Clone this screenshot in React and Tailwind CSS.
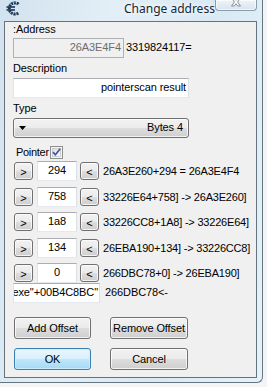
import React from "react";

const btn =
  "flex items-center justify-center border border-[#707070] rounded-[3px] bg-[linear-gradient(#f2f2f2_0%,#ebebeb_48%,#dddddd_52%,#cfcfcf_100%)] shadow-[inset_0_0_0_1px_rgba(255,255,255,0.75)] text-black";

const edit =
  "bg-white border border-t-[#abadb3] border-l-[#e2e3ea] border-r-[#dbdfe6] border-b-[#e3e9ef]";

function SmallBtn({ ch }) {
  return (
    <div className={`${btn} w-[19px] h-[18px] text-[11px] leading-none pb-[1px]`}>
      <span className="relative top-[2px]">{ch}</span>
    </div>
  );
}

function Row({ mt, val, text }) {
  return (
    <div className={`flex items-center h-[20px] ${mt}`}>
      <div className="ml-[1px]">
        <SmallBtn ch=">" />
      </div>
      <div className={`${edit} ml-[4px] w-[40px] h-[20px] flex items-center justify-center`}>
        <span className="relative -top-[1px]">{val}</span>
      </div>
      <div className="ml-[3px]">
        <SmallBtn ch="<" />
      </div>
      <span className="ml-[4px] whitespace-nowrap tracking-[-0.2px]">{text}</span>
    </div>
  );
}

function CeIcon() {
  return (
    <svg width="16" height="15" viewBox="0 0 16 15">
      <path
        d="M13.5 3.2 A5.6 5.6 0 1 0 13.5 11.8"
        fill="none"
        stroke="#1d3654"
        strokeWidth="3"
        strokeDasharray="2 0.8"
      />
      <path d="M1.5 6 H10" stroke="#1d3654" strokeWidth="1.6" />
      <path d="M1.5 9 H10" stroke="#1d3654" strokeWidth="1.6" />
      <path d="M12.8 3.6 A5 5 0 0 0 4 4" fill="none" stroke="#3f7fb0" strokeWidth="0.8" />
    </svg>
  );
}

function CloseBtn() {
  return (
    <div className="ml-auto mr-[5px] w-[46px] h-[11px] rounded-b-[4px] border border-t-0 border-[#8a9bab] bg-[linear-gradient(#eef4f9,#d7e4ee)] shadow-[inset_0_0_0_1px_rgba(255,255,255,0.6)] flex justify-center">
      <svg width="12" height="10" viewBox="0 0 12 10" className="-mt-[2px]">
        <path
          d="M1.5 0 L4.3 0 L6 2.2 L7.7 0 L10.5 0 L7.6 4 L10.5 8 L7.7 8 L6 5.8 L4.3 8 L1.5 8 L4.4 4 Z"
          fill="#f6f8fa"
          stroke="#6f7a84"
          strokeWidth="0.8"
        />
      </svg>
    </div>
  );
}

function Checkbox() {
  return (
    <svg width="13" height="13" viewBox="0 0 13 13">
      <defs>
        <linearGradient id="cbg" x1="0" y1="0" x2="1" y2="1">
          <stop offset="0" stopColor="#dcdcdc" />
          <stop offset="1" stopColor="#ffffff" />
        </linearGradient>
      </defs>
      <rect x="0.5" y="0.5" width="12" height="12" fill="#f4f4f4" stroke="#8e8f8f" />
      <rect x="2.5" y="2.5" width="8" height="8" fill="url(#cbg)" stroke="#c4c4c4" strokeWidth="0.8" />
      <path d="M3 6.2 L5.4 8.8 L10.2 2.8" fill="none" stroke="#3b59a8" strokeWidth="1.7" />
    </svg>
  );
}

export default function App() {
  return (
    <div className="w-[267px] h-[387px] overflow-hidden bg-[#f2f4f6] font-['Liberation_Sans',Arial,sans-serif] text-[11px] leading-[13px] tracking-[-0.1px] text-black">
      <div className="w-[263px] h-[383px] flex flex-col border-r border-b border-[#66757f] rounded-br-[6px] bg-[linear-gradient(100deg,#d2e2ee_0%,#e3eff7_35%,#d9e9f4_65%,#e4f3f9_100%)]">
        {/* title bar */}
        <div className="h-[21px] flex items-start">
          <div className="ml-[5px] mt-[1px]">
            <CeIcon />
          </div>
          <span className="ml-[103px] mt-[1px] text-[12px] leading-[15px] tracking-normal text-[#15263a] font-['Noto_Sans',sans-serif] [text-shadow:0_0_6px_#ffffff,0_0_4px_#ffffff] whitespace-nowrap">
            Change address
          </span>
          <CloseBtn />
        </div>
        {/* client */}
        <div className="ml-[4px] w-[253px] h-[357px] border border-[#66737c] bg-[#f0f0f0] pl-[8px] pt-[1px] flex flex-col">
          <div>:Address</div>
          <div className="mt-[2px] flex items-center">
            <div className="w-[111px] h-[20px] border border-[#adb2b5] bg-[#f0f0f0] text-[#6d6d6d] flex items-center justify-end pr-[2px]">
              <span className="relative -top-[1px]">26A3E4F4</span>
            </div>
            <span className="ml-[2px] relative -top-[1px]">3319824117=</span>
          </div>
          <div className="mt-[4px]">Description</div>
          <div className={`${edit} mt-[3px] w-[176px] h-[20px] flex items-center justify-end pr-[2px]`}>
            <span className="relative -top-[1px]">pointerscan result</span>
          </div>
          <div className="mt-[4px]">Type</div>
          <div className={`${btn} mt-[3px] w-[176px] h-[20px] !justify-between px-[5px]`}>
            <svg width="7" height="4" viewBox="0 0 7 4">
              <path d="M0 0 H7 L3.5 4 Z" fill="#000" />
            </svg>
            <span className="relative -top-[1px]">Bytes 4</span>
          </div>
          <div className="mt-[8px] h-[13px] flex items-center">
            <span className="ml-[3px] mr-[1px] tracking-[-0.3px]">Pointer</span>
            <Checkbox />
          </div>
          <Row mt="mt-[2px]" val="294" text="26A3E260+294 = 26A3E4F4" />
          <Row mt="mt-[6px]" val="758" text="33226E64+758] -> 26A3E260]" />
          <Row mt="mt-[5px]" val="1a8" text="33226CC8+1A8] -> 33226E64]" />
          <Row mt="mt-[6px]" val="134" text="26EBA190+134] -> 33226CC8]" />
          <Row mt="mt-[5px]" val="0" text="266DBC78+0] -> 26EBA190]" />
          <div className="mt-[0px] flex items-center">
            <div className={`${edit} w-[87px] h-[20px] overflow-hidden flex items-center justify-end pr-[1px]`}>
              <span className="whitespace-nowrap relative -top-[1px]">exe"+00B4C8BC"</span>
            </div>
            <span className="ml-[5px] relative -top-[1px]">266DBC78&lt;-</span>
          </div>
          <div className="mt-[14px] flex">
            <div className={`${btn} ml-[1px] w-[77px] h-[22px]`}>Add Offset</div>
            <div className={`${btn} ml-[19px] w-[78px] h-[22px]`}>Remove Offset</div>
          </div>
          <div className="mt-[9px] flex">
            <div className="ml-[1px] w-[77px] h-[22px] flex items-center justify-center rounded-[3px] border border-[#3c7fb1] bg-[linear-gradient(#eaf6fd_0%,#d9f0fc_48%,#bee6fd_52%,#a7d9f5_100%)] shadow-[inset_0_0_0_1px_rgba(200,240,255,0.9)]">
              OK
            </div>
            <div className={`${btn} ml-[19px] w-[78px] h-[22px]`}>Cancel</div>
          </div>
        </div>
      </div>
    </div>
  );
}
